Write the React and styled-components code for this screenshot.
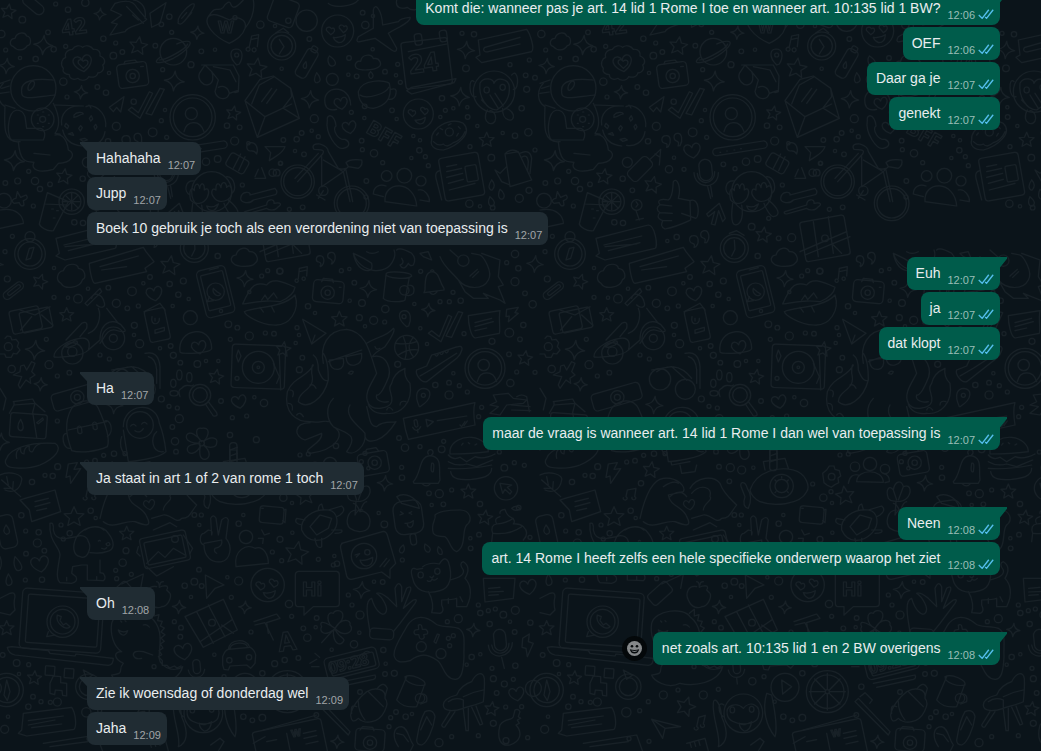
import React from "react";
import styled, { createGlobalStyle, css } from "styled-components";

const GlobalStyle = createGlobalStyle`
  * { box-sizing: border-box; }
  body {
    margin: 0;
    background: #0b141a;
    color: #e9edef;
    font-family: "Segoe UI", "Liberation Sans", Arial, sans-serif;
    font-size: 14px;
    overflow: hidden;
  }
`;

const Chat = styled.main`
  position: relative;
  height: 100vh;
  overflow: hidden;
`;

const Wallpaper = styled.svg`
  position: absolute;
  inset: 0;
  width: 100%;
  height: 100%;
`;

const Thread = styled.ol`
  position: relative;
  display: flex;
  flex-direction: column;
  gap: 12px;
  margin: -8px 0 0;
  padding: 0 41px 0 87px;
  list-style: none;
`;

const Group = styled.li`
  display: flex;
  flex-direction: column;
  align-items: ${(p) => (p.$out ? "flex-end" : "flex-start")};
  gap: 2px;
`;

const Row = styled.div`
  display: flex;
  align-items: center;
  gap: 6px;
`;

const tailIn = css`
  border-top-left-radius: 0;
  &::before {
    content: "";
    position: absolute;
    top: 0;
    left: -7px;
    width: 8px;
    height: 12px;
    background: inherit;
    clip-path: polygon(0 0, 100% 0, 100% 100%, 85% 75%, 0 15%);
  }
`;

const tailOut = css`
  border-top-right-radius: 0;
  &::before {
    content: "";
    position: absolute;
    top: 0;
    right: -7px;
    width: 8px;
    height: 12px;
    background: inherit;
    clip-path: polygon(0 0, 100% 0, 100% 15%, 15% 85%, 0 100%);
  }
`;

const Bubble = styled.div`
  position: relative;
  display: flex;
  align-items: flex-end;
  gap: 7px;
  padding: 8px 6px 2px 9px;
  border-radius: 8px;
  background: ${(p) => (p.$out ? "#005c4b" : "#202c33")};
  ${(p) => p.$tail && (p.$out ? tailOut : tailIn)}
`;

const Text = styled.p`
  margin: 0 0 7px;
  line-height: 16px;
`;

const Meta = styled.span`
  display: flex;
  align-items: center;
  gap: 3px;
  height: 15px;
`;

const Time = styled.time`
  font-size: 11px;
  line-height: 15px;
  color: ${(p) => (p.$out ? "#99beb7" : "#a0a5a8")};
`;

const ReactButton = styled.button`
  display: flex;
  align-items: center;
  justify-content: center;
  width: 25px;
  height: 25px;
  padding: 0;
  border: 0;
  border-radius: 50%;
  background: #04080a;
`;

const Ticks = () => (
  <svg width="16" height="14" viewBox="0.5 2.5 15 13" role="img" aria-label="Gelezen">
    <path
      fill="#53bdeb"
      d="M15.01 3.316l-.478-.372a.365.365 0 0 0-.51.063L8.666 9.879a.32.32 0 0 1-.484.033l-.358-.325a.319.319 0 0 0-.484.032l-.378.483a.418.418 0 0 0 .036.541l1.32 1.266c.143.14.361.125.484-.033l6.272-8.048a.366.366 0 0 0-.064-.512zm-4.1 0l-.478-.372a.365.365 0 0 0-.51.063L4.566 9.879a.32.32 0 0 1-.484.033L1.891 7.769a.366.366 0 0 0-.515.006l-.423.433a.364.364 0 0 0 .006.514l3.258 3.185c.143.14.361.125.484-.033l6.272-8.048a.365.365 0 0 0-.063-.51z"
    />
  </svg>
);

const Smiley = () => (
  <svg width="15" height="15" viewBox="0 0 15 15" aria-hidden="true">
    <circle cx="7.5" cy="7.5" r="7.5" fill="#85888a" />
    <circle cx="5" cy="5.2" r="1.3" fill="#04080a" />
    <circle cx="10" cy="5.2" r="1.3" fill="#04080a" />
    <path d="M2.8 8.2 Q7.5 9.6 12.2 8.2 Q11.4 12.4 7.5 12.4 Q3.6 12.4 2.8 8.2 Z" fill="#04080a" />
    <path d="M4.3 9.5 Q7.5 10.3 10.7 9.5 Q10 10.9 7.5 10.9 Q5 10.9 4.3 9.5 Z" fill="#85888a" />
  </svg>
);

/* Wallpaper motifs: [x, y, size, rotation] in a 1620-unit wide repeating tile */
const STARS = [
  [25, 35, 23, 8], [415, 138, 28, 8], [770, 205, 31, 8], [700, 340, 22, 10], [192, 530, 24, 8], [338, 555, 26, 12],
  [670, 705, 24, 8], [510, 797, 30, 8], [120, 845, 23, 18], [200, 945, 22, 0], [850, 1048, 23, 8], [648, 1131, 23, 10],
  [1460, 420, 23, 0], [1018, 958, 24, 0], [1575, 1075, 23, 8], [1405, 1475, 23, 0], [333, 1410, 25, 8],
  [915, 1487, 29, -8], [222, 1551, 31, 0], [380, 1601, 22, 0], [20, 1885, 23, 0], [103, 2034, 22, 5],
  [437, 2120, 30, 18], [1455, 1553, 23, 8], [1475, 2127, 22, 8], [890, 1660, 36, 10],
];
const SPARKLES = [
  [300, 42, 18], [130, 135, 29], [20, 198, 23], [523, 243, 30], [243, 277, 20], [43, 482, 30], [592, 98, 20],
  [735, 836, 24], [105, 1050, 29], [122, 1153, 20], [343, 1215, 26], [1398, 150, 26], [1380, 290, 28], [930, 298, 26],
  [1105, 867, 25], [1285, 930, 20], [1605, 792, 25], [1155, 1450, 23], [537, 1821, 20], [735, 1822, 19],
  [1085, 1770, 25], [1420, 1890, 20], [1012, 2225, 20], [2, 1325, 26],
];
const HEARTS = [
  [248, 190, 28], [457, 452, 25], [463, 881, 24], [717, 1205, 22], [597, 1042, 22], [1048, 382, 21], [1023, 310, 20],
  [120, 1692, 27], [448, 1514, 17], [550, 1955, 27], [1585, 1761, 25], [1550, 2082, 23],
];
const DOTS = [
  [67, 59, 10], [167, 12, 6], [204, 29, 8], [256, 8, 11], [144, 97, 7], [17, 150, 6], [60, 174, 5], [107, 177, 8],
  [161, 148, 8], [197, 139, 6], [310, 116, 8], [347, 129, 6], [340, 167, 10], [367, 156, 7], [466, 137, 7],
  [484, 73, 7], [515, 97, 6], [508, 50, 8], [604, 154, 7], [645, 149, 5], [573, 194, 9], [488, 209, 6], [327, 219, 5],
  [190, 245, 11], [292, 261, 7], [318, 278, 8], [201, 291, 6], [401, 305, 8], [495, 330, 5], [484, 362, 6],
  [349, 379, 12], [324, 424, 8], [458, 397, 13], [500, 412, 6], [402, 473, 5], [387, 508, 11], [262, 487, 15],
  [432, 508, 6], [550, 493, 7], [585, 506, 6], [618, 485, 11], [653, 477, 10], [704, 423, 12], [745, 430, 5],
  [719, 382, 7], [681, 377, 8], [781, 74, 11], [705, 53, 6], [4, 102, 11], [86, 514, 6], [53, 543, 9], [16, 549, 7],
  [105, 543, 11], [120, 567, 8], [150, 553, 7], [248, 536, 8], [277, 571, 7], [223, 667, 8], [249, 669, 8], [100, 618, 6],
  [727, 555, 6], [818, 518, 11], [841, 490, 6], [635, 680, 10], [716, 715, 7], [755, 713, 12], [686, 655, 6],
  [410, 711, 8], [382, 723, 5], [37, 709, 6], [15, 755, 6], [22, 837, 9], [162, 804, 5], [162, 892, 6], [204, 893, 5],
  [234, 896, 13], [264, 866, 5], [325, 863, 7], [349, 910, 12], [396, 874, 13], [382, 925, 7], [415, 918, 6],
  [450, 831, 7], [430, 850, 5], [509, 852, 8], [550, 843, 9], [535, 884, 8], [566, 897, 5], [518, 918, 5],
  [403, 976, 9], [402, 1005, 5], [419, 1031, 12], [480, 1045, 5], [512, 1038, 7], [520, 1066, 9], [541, 1088, 7],
  [653, 768, 8], [592, 1092, 10], [618, 1083, 5], [655, 1083, 5], [691, 1018, 6], [685, 973, 10], [712, 983, 7],
  [748, 1008, 12], [796, 999, 6], [822, 1001, 7], [785, 828, 6], [803, 812, 6], [839, 814, 9], [748, 876, 5],
  [139, 1018, 6], [147, 1094, 12], [35, 1107, 11], [208, 1118, 7], [172, 1128, 6], [300, 1065, 6], [328, 1077, 6],
  [387, 1068, 7], [484, 1197, 9], [507, 1219, 6], [532, 1224, 6], [663, 1203, 7], [792, 1209, 11], [763, 1192, 5],
  [538, 1256, 12], [517, 1281, 7], [525, 1324, 11], [697, 1253, 6], [740, 1248, 6], [690, 1305, 8], [769, 1319, 9],
  [528, 1355, 7], [342, 1361, 8], [311, 1366, 6], [172, 1263, 6], [173, 1400, 9], [260, 1386, 6], [285, 1382, 7],
  [135, 1426, 6], [96, 1446, 8], [158, 1428, 8], [303, 1450, 8], [375, 1361, 6], [537, 1400, 7], [571, 1403, 12],
  [605, 1410, 12], [568, 1444, 7], [640, 1403, 5], [64, 1546, 8], [77, 1593, 6], [116, 1597, 8], [112, 1629, 12],
  [133, 1652, 7], [78, 1661, 7], [76, 1740, 6], [126, 1739, 8], [183, 1575, 6], [209, 1600, 8], [190, 1617, 6],
  [272, 1532, 8], [287, 1554, 5], [378, 1652, 9], [368, 1688, 11], [347, 1711, 6], [350, 1736, 6], [394, 1723, 6],
  [583, 1545, 7], [604, 1545, 6], [598, 1575, 5], [716, 1571, 8], [730, 1545, 5], [597, 1709, 7], [554, 1757, 8],
  [583, 1745, 10], [605, 1758, 7], [573, 1791, 5], [716, 1743, 12], [682, 1732, 5], [694, 1792, 6], [523, 1865, 6],
  [543, 1883, 7], [541, 1910, 7], [753, 1896, 6], [643, 1964, 5], [8, 1965, 7], [50, 1989, 10], [86, 1994, 6],
  [57, 2022, 5], [99, 2090, 7], [85, 2120, 8], [123, 2105, 6], [151, 2107, 6], [24, 2150, 5], [14, 2188, 12],
  [172, 2106, 12], [259, 2137, 14], [299, 2132, 6], [370, 2085, 12], [414, 2070, 6], [462, 2000, 6], [490, 2085, 12],
  [637, 2044, 11], [672, 2030, 6], [535, 2068, 6], [730, 2150, 8], [757, 2161, 7], [787, 2153, 10], [704, 2105, 5],
  [787, 2020, 8], [964, 2060, 8], [949, 2145, 7], [267, 2216, 6], [327, 2224, 6], [325, 2105, 6],
  [825, 78, 5], [865, 62, 8], [928, 117, 7], [1088, 38, 7], [1096, 75, 11], [1119, 48, 5], [1118, 148, 5],
  [1047, 174, 7], [1070, 229, 7], [1045, 224, 5], [1193, 193, 6], [1155, 215, 7], [1188, 226, 5], [1201, 247, 6],
  [845, 206, 5], [943, 356, 12], [935, 392, 5], [905, 399, 7], [955, 410, 6], [890, 418, 8], [850, 420, 7], [1094, 319, 7],
  [1054, 337, 6], [1093, 354, 5], [1176, 331, 7], [1190, 357, 5], [1085, 422, 7], [1087, 449, 6], [1122, 460, 11],
  [1240, 408, 5], [1260, 421, 5], [1258, 451, 8], [1276, 470, 6], [1234, 474, 5], [1285, 497, 6], [1099, 543, 7],
  [1098, 591, 6], [1148, 488, 6], [1326, 295, 8], [1336, 331, 6], [1321, 351, 5], [1360, 325, 5], [1402, 322, 5],
  [1403, 351, 7], [1432, 378, 5], [1398, 205, 10], [1386, 100, 6], [1422, 103, 8], [1577, 226, 7], [1605, 233, 7],
  [1530, 194, 6], [1580, 268, 9], [1565, 325, 8], [1508, 399, 5], [1545, 407, 8], [1585, 397, 11], [1474, 473, 10],
  [1410, 440, 6], [1587, 571, 9], [1558, 595, 12], [1408, 611, 11], [1440, 619, 5], [1605, 450, 6], [1588, 180, 6],
  [885, 453, 5], [912, 463, 7], [842, 490, 6], [830, 518, 10], [868, 628, 6], [908, 622, 7], [1478, 623, 7],
  [840, 813, 9], [1024, 812, 6], [1048, 807, 5], [1063, 848, 7], [1049, 902, 5], [1086, 909, 10], [1156, 927, 11],
  [1243, 912, 5], [1154, 966, 6], [1121, 961, 12], [1078, 953, 9], [1095, 979, 5], [924, 919, 8], [945, 939, 5],
  [891, 983, 6], [897, 1005, 5], [887, 1029, 5], [1261, 985, 5], [1281, 1032, 5], [1193, 1093, 9],
  [1262, 814, 6], [1320, 905, 6], [1348, 905, 6], [1382, 902, 8], [1359, 877, 6], [1392, 1001, 6], [1476, 1024, 9],
  [1528, 998, 13], [1570, 975, 8], [1560, 1018, 7], [1598, 913, 11], [1575, 880, 7], [1545, 845, 12], [1520, 788, 6],
  [1555, 805, 8], [1545, 762, 11], [1527, 1063, 7], [1550, 1116, 6], [1531, 1149, 11], [1605, 1117, 6], [1306, 1155, 8],
  [1347, 1148, 7], [1378, 1157, 6], [1347, 1185, 12], [1402, 1176, 6], [1360, 1120, 5], [1445, 1222, 6], [1436, 1250, 6],
  [907, 1073, 7], [898, 1109, 9], [1197, 1314, 7], [1215, 1343, 11], [1260, 1340, 6], [1331, 1324, 6], [1325, 1348, 10],
  [1205, 1402, 6], [1206, 1433, 8], [1287, 1480, 7], [1318, 1481, 12], [1355, 1470, 6], [1008, 1338, 8], [1498, 1356, 6],
  [1513, 1403, 10], [1543, 1388, 6], [1573, 1396, 6], [818, 1452, 6], [850, 1493, 11], [873, 1475, 6], [876, 1509, 5],
  [1084, 1385, 6], [1095, 1360, 6], [1105, 1405, 5], [925, 1362, 6], [900, 1365, 6], [840, 1618, 9], [877, 1598, 5],
  [817, 1656, 6], [845, 1682, 6], [955, 1678, 6], [1003, 1668, 5], [1000, 1695, 6], [1011, 1691, 8], [1153, 1573, 10],
  [1136, 1539, 5], [1122, 1745, 5], [1148, 1746, 7], [1045, 1785, 6], [1056, 1815, 6], [1080, 1845, 12], [867, 1812, 11],
  [875, 1849, 6], [950, 1854, 7], [910, 1885, 7], [922, 1913, 11], [947, 1882, 5], [1062, 1933, 11], [1078, 1898, 5],
  [1150, 1950, 8], [995, 1949, 5], [824, 1991, 9], [854, 1980, 8], [895, 1974, 7], [1157, 1991, 5], [1155, 2022, 7],
  [1183, 2020, 9], [1080, 2076, 7], [1188, 2136, 7], [1217, 2150, 8], [1172, 2153, 6], [1236, 2142, 5], [1167, 2180, 6],
  [1317, 2228, 12], [1355, 2210, 6], [1342, 1865, 6], [1375, 1856, 12], [1345, 1915, 6], [1360, 1907, 6], [1349, 1937, 6],
  [1415, 1971, 8], [1400, 1994, 5], [1441, 1963, 5], [1435, 1815, 6], [1441, 1839, 8], [1465, 1832, 6], [1486, 1827, 6],
  [1510, 1844, 10], [1546, 1831, 12], [1530, 1865, 5], [1544, 1896, 7], [1469, 1872, 8], [1476, 2005, 6], [1480, 2036, 9],
  [1513, 2052, 9], [1546, 1997, 8], [1540, 2038, 6], [1490, 2079, 7], [1480, 2170, 9], [1591, 1868, 8], [1517, 2121, 6],
  [1565, 2120, 6], [1583, 2213, 6], [1435, 2207, 6], [1440, 1512, 8], [1411, 1615, 5], [1437, 1604, 7], [1412, 1645, 7],
  [1330, 1513, 7], [1295, 1515, 5], [1207, 1680, 6], [1556, 1523, 7], [1590, 1612, 6],
];
/* Round-cornered boxes: [cx, cy, width, height, corner, rotation] */
const BOXES = [
  [398, 225, 90, 72, 12, -8], [985, 875, 92, 66, 12, 5], [1120, 1390, 90, 66, 12, -10], [1110, 2220, 88, 66, 12, 4],
  [600, 445, 165, 22, 11, -9], [647, 875, 88, 145, 14, -14], [647, 872, 68, 108, 4, -14],
  [472, 975, 62, 96, 8, -12], [77, 960, 90, 70, 8, -12], [108, 960, 92, 62, 6, -12],
  [775, 1100, 160, 130, 10, 2], [230, 1190, 150, 52, 12, -16], [85, 1277, 110, 72, 8, 4],
  [495, 1648, 140, 92, 10, -12], [495, 1650, 116, 68, 4, -12], [185, 1862, 245, 180, 14, 4], [188, 1862, 215, 145, 5, 4],
  [855, 715, 135, 120, 8, -10], [815, 1545, 72, 50, 9, 5], [1055, 1990, 160, 66, 14, -14], [1058, 1992, 135, 42, 6, -14],
  [1280, 190, 140, 140, 8, -7], [1255, 118, 22, 34, 8, -8], [1330, 108, 22, 34, 8, -8], [150, 2012, 28, 28, 2, 4],
  [207, 2020, 28, 28, 2, 4], [870, 2230, 210, 110, 8, -12], [1385, 530, 120, 130, 10, -10], [1415, 520, 34, 48, 5, -10],
  [920, 190, 36, 92, 12, 30], [943, 148, 18, 18, 5, 30], [20, 1595, 52, 100, 16, -12], [497, 510, 38, 64, 19, -6],
  [590, 2000, 22, 42, 11, -5], [1500, 1920, 36, 64, 18, -6], [1145, 1902, 72, 32, 12, 4], [100, 15, 74, 30, 15, 40],
  [1225, 1552, 86, 100, 26, -8], [1240, 1618, 18, 34, 9, -8], [700, 1370, 22, 84, 10, 0],
  [850, 35, 80, 80, 12, 20], [300, 507, 40, 80, 12, 45], [360, 1780, 40, 74, 10, 48],
  [712, 490, 44, 62, 10, -60], [40, 872, 70, 24, 12, -38], [42, 870, 46, 10, 5, -38],
];
/* Rings: [x, y, radius] */
const RINGS = [
  [398, 228, 20], [398, 228, 8], [520, 155, 40], [100, 265, 68], [128, 358, 34], [128, 358, 9], [578, 352, 68],
  [578, 352, 58], [574, 341, 18], [215, 605, 38], [215, 605, 28], [290, 615, 16], [90, 762, 46], [90, 762, 36],
  [90, 710, 15], [583, 745, 42], [583, 745, 32], [845, 138, 42], [845, 138, 32], [1013, 93, 48], [1255, 342, 45],
  [803, 1755, 50], [1482, 275, 62], [635, 575, 60], [610, 2140, 58], [920, 62, 32], [25, 1040, 12],
  [983, 878, 20], [983, 878, 8], [1124, 1388, 20], [1124, 1388, 8], [1110, 2228, 20], [1110, 2228, 8],
  [647, 875, 26], [663, 933, 5], [775, 1102, 48], [775, 1102, 18], [775, 1102, 4], [217, 1060, 32], [217, 1055, 14],
  [340, 1015, 34], [340, 1015, 12], [1220, 1042, 36], [1455, 1105, 60], [1455, 1105, 50], [1451, 1095, 17],
  [420, 1275, 40], [600, 1185, 32], [600, 1185, 22], [605, 1330, 8], [725, 1458, 35], [725, 1458, 20],
  [875, 1430, 10], [188, 1865, 47], [188, 1865, 37], [735, 2062, 42], [862, 2075, 63], [862, 2075, 50],
  [862, 2075, 6], [20, 2070, 50], [20, 2070, 38], [265, 2060, 38], [265, 2060, 27], [893, 545, 50], [893, 545, 42],
  [1055, 610, 52], [1055, 610, 44], [970, 572, 14], [1160, 528, 16], [1213, 527, 22], [1263, 543, 15],
  [945, 1400, 14], [990, 1392, 20], [1035, 1407, 14], [1518, 1465, 35], [1264, 1940, 15], [1323, 1961, 15],
  [1092, 1668, 38], [1102, 1657, 8], [1390, 782, 17], [571, 953, 21], [738, 1611, 20], [997, 238, 18],
  [688, 1981, 8], [747, 1972, 8], [1213, 871, 14], [1260, 2095, 14], [1518, 2222, 9],
  [1270, 1186, 6], [1212, 950, 6], [710, 165, 6], [855, 715, 10], [636, 1868, 10], [525, 1617, 10], [1348, 396, 12],
  [12, 602, 22], [360, 1138, 32], [436, 1168, 30], [232, 1192, 20], [232, 1192, 9], [1600, 2065, 24],
];
/* Line drawings */
const PATHS = [
  // rocket, paper plane, comet and flaming heart
  "M345 10 C375 0 400 2 410 22 L440 58 C420 80 385 75 375 95 L330 105 L352 72 L334 68 L365 45 L332 30 Z M380 20 L430 70 M398 45 L415 60 M400 0 C430 5 440 30 435 55 M450 40 L498 8 L480 70 L455 82 Z M535 65 C530 50 575 5 582 12 C588 18 550 75 540 72 C535 72 533 70 535 65 M545 55 L560 38 M556 60 L575 38",
  "M688 130 C640 110 610 70 625 50 C640 35 665 50 688 60 C715 45 742 60 735 85 C728 108 710 118 688 130 M625 50 C650 10 650 40 670 22 C675 10 690 0 692 12 C700 35 720 10 730 0 M735 85 C755 60 765 30 760 0",
  // clouds
  "M40 140 C25 135 30 115 45 115 C50 95 75 95 80 108 C95 110 95 135 82 137 C70 155 50 152 40 140 Z M183 850 C165 840 172 815 190 812 C200 785 235 790 235 805 C258 808 258 835 248 838 C240 865 195 870 183 850 Z M700 790 C688 780 695 765 708 765 C715 740 740 740 748 755 C768 752 780 780 765 790 C755 802 712 802 700 790 Z M1070 205 C1060 195 1070 180 1082 184 C1085 162 1115 160 1120 176 C1140 172 1148 195 1135 202 C1120 212 1080 212 1070 205 Z M1190 0 C1185 25 1205 28 1222 22 C1235 35 1255 30 1262 20",
  // planet ring, music notes, pins
  "M480 172 C455 190 475 195 520 175 C565 150 580 125 565 124 C550 122 535 130 530 132 M478 180 C500 180 560 145 563 132 M748 140 L755 108 L776 104 L772 140 M755 118 L774 114 M748 143 a6 6 0 1 0 1 1 M766 145 a6 6 0 1 0 1 1 M895 835 L898 805 L922 800 L920 828 M898 815 L921 810 M893 838 a5 5 0 1 0 1 1 M914 832 a5 5 0 1 0 1 1 M258 1490 L262 1470 L288 1465 L284 1490 M250 1493 a6 5 0 1 0 9 -2 M276 1492 a6 5 0 1 0 9 -2 M470 2180 L476 2152 L496 2146 L490 2172 M463 2183 a6 5 0 1 0 9 -2 M482 2175 a6 5 0 1 0 9 -2",
  "M710 195 C685 170 690 148 708 147 C730 147 730 172 718 192 Z M1220 980 C1190 955 1195 935 1212 932 C1235 932 1234 960 1226 978 Z M1258 1220 C1240 1180 1255 1165 1272 1165 C1295 1168 1300 1195 1260 1220 Z",
  // scalloped badge
  "M190 205 C178 190 188 175 197 172 C192 155 208 148 217 148 C225 135 240 135 248 142 C260 132 275 140 280 148 C298 146 302 160 300 168 C318 175 316 190 308 195 C316 210 302 220 294 218 C290 235 272 232 266 230 C258 245 240 242 234 235 C220 242 208 235 208 224 C195 224 186 215 190 205 Z M235 190 C232 178 245 175 249 184 C258 176 268 182 262 194 L250 205 Z",
  // camera tops
  "M372 192 L375 184 L405 180 L412 187 M422 200 l8 -1 M965 845 L970 835 L998 838 L1000 848 M1018 862 l5 0 M1095 1358 L1100 1348 L1128 1343 L1135 1352 M1080 2190 L1088 2180 L1118 2182 L1122 2192",
  // sunglasses
  "M598 220 C592 240 610 258 625 254 C640 250 642 228 635 215 M605 195 L700 195 L717 228 L715 275 L705 278 M598 220 L615 195 L635 215 L655 240 L645 275 C650 298 680 305 688 280 L712 272 M640 200 L690 210 L708 245 M655 262 C670 255 685 262 688 280",
  // astronaut
  "M65 275 C60 240 105 235 160 240 M65 275 C62 305 110 290 165 285 M85 270 C80 255 95 240 102 245 C108 255 92 275 85 270 M10 250 C-10 270 -10 305 15 320 C12 380 10 430 60 425 M50 330 C20 335 20 410 35 420 L130 420 C140 400 130 385 120 385 L80 385 L75 350 C70 335 60 330 50 330 M15 315 L45 325 M160 310 C180 350 180 380 165 400 L180 402 M55 425 C60 490 80 485 102 487 C90 510 120 520 160 508 L175 490 C215 490 230 460 205 450 C200 410 180 400 165 405 M102 460 L150 465 M0 250 L30 240 M5 265 L28 258 M0 280 L28 276",
  "M112 345 l3 0 M128 336 l3 0 M145 345 l3 0 M112 370 l3 0 M128 380 l3 0 M145 370 l3 0",
  // cratered moon
  "M165 315 L250 318 M185 375 C180 340 205 318 235 318 M265 316 C300 318 320 350 317 380 M315 395 C310 430 280 440 260 436 M245 438 C215 435 195 420 188 390 M222 345 C230 335 248 335 250 342 C240 342 235 350 222 352 Z M258 320 l10 -4 l5 8 M268 355 l6 -8 l4 10 l-6 6 Z M282 380 l5 -7 l4 8 l-5 8 Z M236 385 l6 -8 l5 6 l-6 10 Z M198 370 l8 8 l-4 8 l-8 -8 Z M205 402 l12 -4 l4 8 Z M240 418 l14 -3 l8 5 l-14 4 Z",
  // paper planes and double ticks
  "M328 322 L372 290 L362 336 L350 322 L340 335 Z M385 330 L395 322 L415 338 L448 275 L458 280 L420 355 Z M438 340 L480 265 L493 268 L455 345 Z M795 440 L855 440 C850 460 825 470 808 482 L812 458 Z M908 958 L978 1000 L935 1032 Z M935 1032 L945 1005 M616 1725 L672 1755 L645 1765 L620 1795 Z M335 2158 L422 2180 L375 2185 L368 2215 Z M336 2158 L375 2185 M1285 1000 L1295 992 L1318 1010 L1345 945 L1355 950 L1323 1025 Z M1338 1008 L1375 935 L1388 938 L1355 1012 Z",
  // avatars
  "M552 395 C560 360 600 358 612 395 M1432 1145 C1440 1110 1480 1110 1490 1145",
  // open envelope
  "M735 302 L780 238 L820 228 L872 265 L898 355 L772 412 L735 302 L795 350 L875 312 M795 350 L772 412 M850 325 L898 355 M755 312 L778 255 L820 232 M785 305 L815 265 M800 310 L830 268 M872 265 L875 290 L848 325",
  // quotes
  "M385 440 C395 425 392 405 378 407 C362 408 362 428 376 430 C382 430 382 435 380 442 Z M420 437 C430 420 425 398 412 400 C398 402 400 422 412 424 C418 426 416 432 414 438 Z M770 462 C776 445 768 427 752 428 C735 432 738 452 752 453 C762 452 766 455 770 462 Z M468 740 C480 725 475 705 460 707 C445 708 446 728 458 730 C465 732 464 738 462 742 Z M500 728 C512 712 506 690 492 692 C478 696 480 712 490 714 C498 716 496 722 494 728 Z M962 800 C976 790 974 768 960 767 C946 768 946 784 956 786 C964 788 964 794 960 798 Z M996 792 C1010 780 1008 756 994 757 C980 758 980 774 990 776 C998 780 998 786 994 792 Z",
  // pencils
  "M330 478 L362 448 L358 495 M345 462 L358 470 M365 1752 L430 1722 L422 1765 M765 535 L797 535 L785 503 M700 505 L722 462 M716 512 L735 470 M775 508 L765 530",
  // password dots and microphones
  "M540 457 h2 M560 453 h2 M582 450 h2 M602 446 h2 M462 518 C465 570 535 570 535 518 M472 520 C475 560 525 555 524 515 M503 560 L512 595 M512 558 L517 590 M565 2010 C570 2040 610 2040 614 2008 M590 2034 L592 2052 M1465 1935 C1470 1985 1535 1975 1537 1928 M1475 1935 C1480 1972 1528 1965 1527 1930 M1505 1972 L1513 2005",
  // monkey covering its eyes
  "M572 600 C565 575 575 555 583 572 C583 550 596 545 599 565 C602 545 614 548 613 570 C625 560 630 575 622 592 C610 615 585 615 572 600 M640 590 C630 575 638 562 648 570 C646 548 658 545 663 563 C664 543 678 543 680 562 C688 552 696 560 696 575 C695 605 655 615 640 590 M578 610 C570 670 580 680 595 672 C610 660 608 630 605 615 M685 600 C715 625 725 645 700 650 C690 650 675 620 672 610 M620 618 Q640 625 655 612 Q645 640 625 628 Z M570 585 C550 575 555 540 583 543 M680 530 C705 530 710 570 696 580",
  // monkey with hand over mouth
  "M1440 250 C1450 230 1480 235 1482 250 C1490 230 1525 235 1528 260 C1530 290 1515 315 1490 330 C1460 330 1435 290 1440 250 M1422 245 C1405 225 1405 300 1428 290 M1535 225 C1555 200 1560 270 1540 268 M1445 300 L1465 320 M1470 285 L1495 325 M1485 280 L1510 318 M1462 330 C1440 370 1485 385 1487 355 C1488 340 1475 330 1470 332 M1508 325 C1505 365 1545 370 1540 345 C1535 330 1520 325 1515 325 M1460 270 m-8 0 a8 9 0 1 0 16 0 a8 9 0 1 0 -16 0 M1508 262 m-8 0 a8 9 0 1 0 16 0 a8 9 0 1 0 -16 0",
  // monkey with open arms
  "M562 2145 C555 2115 590 2105 610 2125 C630 2100 665 2115 655 2150 C650 2180 570 2180 562 2145 M577 2130 m-7 0 a7 9 0 1 0 14 0 a7 9 0 1 0 -14 0 M635 2128 m-7 0 a7 9 0 1 0 14 0 a7 9 0 1 0 -14 0 M598 2170 Q610 2180 635 2165 Q630 2195 612 2193 Q598 2185 598 2170 Z M552 2115 C530 2100 535 2140 550 2150 M520 2110 C515 2150 545 2215 535 2240 C560 2230 568 2200 545 2150 C540 2100 520 2090 520 2110 M680 2080 C665 2130 680 2180 705 2210 C715 2180 700 2110 695 2085 Z",
  // cocktail, cherry, thumbs up, arrow
  "M142 578 L205 605 L160 692 C140 695 120 680 118 672 Z M135 612 L200 615 M190 605 L240 605 M215 580 L215 630 M197 587 L233 623 M233 587 L197 623 M155 627 h5 M170 632 h5 M160 654 h5 M288 632 L298 660 M288 660 L310 655 M288 605 l6 8 l-6 8",
  "M400 545 C410 530 425 560 415 595 L450 602 L452 660 C430 670 410 680 375 687 C360 680 365 670 368 662 C350 655 352 645 360 638 C348 630 350 620 360 614 C348 600 365 595 385 600 C400 590 398 560 400 545 M360 614 L395 618 M360 638 L397 640 M368 662 L395 662 M450 602 C480 590 478 650 468 655 L425 640 M500 642 L538 610 L556 655 L548 665 L536 632 L525 675 L514 672 L524 635 L505 650 Z",
  "M52 575 L62 592 L78 585 C88 595 75 600 70 602 L72 615 C65 622 60 615 58 608 L42 610 C30 602 42 595 48 595 Z M0 630 C50 620 70 650 70 670 L0 685",
  // spanners
  "M722 595 C725 570 755 575 750 585 L825 565 C835 575 830 585 822 585 L760 600 C750 612 722 610 722 595 M735 635 L800 615 C800 595 825 595 822 610 C845 605 845 615 835 620 C825 635 805 630 800 625 L740 642 C730 642 732 636 735 635",
  // stopwatch needle and clock hands
  "M78 780 L88 745 L102 742 L92 775 Z M583 720 L585 748 L575 768 M568 700 L590 692 L612 706 M838 118 L852 140 L838 162 M828 98 L850 85 L866 98 M12 2085 L20 2040 L30 2075 L22 2102 Z",
  // message bubbles
  "M168 715 L325 675 C345 675 355 740 345 745 L195 780 L168 768 L178 760 Z M192 735 L305 708 M195 740 L290 732 M205 752 L300 728 M268 790 L430 742 L438 755 L462 785 L435 805 L440 815 L285 850 C275 850 268 800 268 790 M300 800 L415 768 M305 810 L380 800",
  "M1435 120 L1580 88 C1590 100 1605 145 1595 155 L1445 188 L1428 172 L1440 165 Z M1455 142 L1560 112 M1465 155 L1560 132 M1455 142 C1445 150 1455 158 1465 155 M75 1495 L165 1470 L182 1535 L95 1565 L88 1530 L60 1500 Z M105 1505 L145 1495 M105 1520 L150 1508 M110 1532 L140 1525",
  "M1405 947 L1500 932 C1495 950 1502 990 1498 1000 L1425 1014 C1412 1010 1405 970 1405 947 M1425 968 L1475 955 M1425 980 L1480 965 M1425 992 L1460 984 M1450 1735 L1545 1735 L1540 1795 L1455 1806 Z M1466 1765 L1500 1762 M1466 1776 L1510 1774 M1466 1786 L1495 1784 M70 2140 L215 2122 C228 2140 230 2180 222 2188 L80 2208 L55 2200 L65 2190 Z M85 2162 L190 2148 M85 2175 L165 2160 M95 2183 L185 2172 M130 2230 L290 2205 L310 2260 M150 2240 L265 2225 M896 1714 H1010 Q1018 1715 1018 1725 V1810 Q1018 1820 1008 1820 H940 L912 1845 V1820 H895 Q886 1820 886 1808 V1725 Q886 1715 896 1714",
  "M1025 1630 L1150 1594 Q1158 1594 1162 1605 L1187 1690 L1170 1708 L1170 1735 L1145 1716 L1055 1738 Q1045 1740 1040 1728 L1022 1645 Q1020 1634 1028 1630 M1065 1665 l14 -4 l-10 10 M1080 1680 Q1095 1685 1118 1672 Q1120 1695 1100 1698 Q1085 1698 1080 1680 M1140 1700 L1148 1690 L1160 1675 M1152 1700 L1168 1680",
  // map folds
  "M820 665 L835 770 M865 650 L880 760 M780 755 L920 695 M795 765 L930 710 M880 735 L905 760 M555 1850 L670 1798 L712 1890 L610 1942 Z M590 1835 L640 1930 M625 1815 L675 1910 M600 1925 L695 1860 M665 1875 L700 1900",
  // letters, scooter
  "M60 930 L105 945 L150 920 M62 990 L95 950 M158 975 L125 945 M162 1070 C160 1050 200 1020 240 1015 C280 1010 265 1050 265 1050 C250 1070 160 1075 162 1070 M198 1020 L245 970 Q265 960 260 985 L240 1010 M195 1040 L225 1022 Q240 1025 225 1035 L205 1042 Z M265 1050 L300 1020 C300 960 350 950 372 985 C385 1000 360 995 345 990 C320 985 310 1020 300 1030 M265 1000 C295 990 305 950 295 925 M320 925 L355 970 M255 910 L300 865 L305 875 L262 917 Z M275 895 C280 875 305 880 312 905 C320 925 300 925 290 915",
  // passport and lips
  "M432 935 L480 910 L495 930 M456 950 C450 980 480 975 478 955 M465 955 l0 8 M465 990 l28 -8 l0 10 l-28 8 Z M728 912 C755 850 770 845 800 855 C815 835 840 840 885 862 C880 890 850 900 840 905 C800 900 780 905 728 912 M733 935 C760 920 850 925 885 885 C900 930 870 980 820 975 C780 975 735 945 733 935 M785 900 l10 -15 l8 14 l18 -20 l10 15 M780 922 l10 14 M815 920 l8 16",
  // handsets
  "M640 865 C635 880 655 895 662 882 L652 876 L645 870 Z M172 1845 C165 1870 200 1895 210 1880 L198 1870 L190 1875 L180 1862 L184 1850 Z M145 1895 L140 1910 L165 1905 M628 810 L655 803 M628 890 L622 905 L640 902",
  // people holding a heart
  "M540 1055 C530 985 635 970 635 1045 C635 1060 540 1065 540 1055 M975 310 C965 255 1050 250 1052 315 M975 310 Q980 335 1010 328",
  // gear rims
  "M15 1015 L22 1008 L32 1010 L36 1020 L48 1018 L56 1028 L52 1040 L60 1050 L50 1062 L40 1060 L34 1072 L18 1072 L14 1062 L0 1062 M868 1398 L882 1398 L885 1408 L898 1412 L902 1428 L894 1434 L896 1448 L884 1454 L874 1462 L862 1456 L852 1448 L850 1434 L848 1420 L860 1410 Z",
  // robot star
  "M62 1098 L72 1095 L80 1110 L95 1085 L105 1090 L95 1115 L105 1125 L90 1135 L92 1150 L78 1140 L60 1165 L55 1155 L65 1130 L40 1125 L60 1115 Z M0 1165 L18 1195 L10 1230",
  // spectacles, paw, magnifier
  "M335 1110 L395 1100 L440 1140 M350 1115 C380 1095 420 1090 455 1135 M435 1060 Q475 1050 480 1100 L480 1165 M445 1070 Q468 1075 470 1110 L470 1150 M616 1212 L640 1248 Q655 1250 650 1238 L625 1205",
  "M538 1125 m-8 0 a8 15 0 1 0 16 0 a8 15 0 1 0 -16 0 M568 1132 m-8 0 a8 14 0 1 0 16 0 a8 14 0 1 0 -16 0 M520 1150 m-8 0 a8 12 0 1 0 16 0 a8 12 0 1 0 -16 0 M522 1180 m-12 0 a12 8 0 1 0 24 0 a12 8 0 1 0 -24 0 M545 1165 C560 1145 575 1165 580 1155 M540 1190 C535 1175 535 1170 545 1165",
  // turntable arm and wand
  "M838 1065 L842 1170 M820 1090 L838 1130 L830 1150 M715 1050 l8 18 l-8 18 l-6 -18 Z M705 1135 a6 6 0 1 0 12 0 a6 6 0 1 0 -12 0",
  // backpack and carton
  "M215 1225 C240 1195 280 1195 295 1225 C320 1280 330 1320 322 1340 C290 1355 240 1360 215 1352 C200 1310 190 1270 215 1225 M205 1290 L320 1265 M232 1282 q6 -8 12 0 l2 16 q-6 6 -12 0 Z M278 1270 q6 -8 12 0 l2 16 q-6 6 -12 0 Z M200 1300 C180 1300 190 1350 210 1345 M312 1265 C330 1250 345 1295 322 1310 M40 1205 L98 1197 L105 1210 M42 1205 L42 1215 L105 1210 L135 1235 M42 1215 L28 1240 M98 1237 L110 1312 M98 1237 L105 1210 M62 1258 C50 1275 52 1290 62 1292 C72 1290 72 1275 62 1258 M110 1268 l18 -14 l2 5 l-15 12 Z",
  // bread, bolts, leaf
  "M20 1375 C30 1345 90 1325 165 1330 C190 1345 165 1375 120 1395 C80 1410 25 1405 20 1395 Q12 1385 20 1375 M50 1375 Q45 1350 62 1345 Q60 1360 72 1362 Q72 1340 88 1338 Q85 1358 98 1355 Q105 1335 120 1332 M205 1392 L232 1388 L222 1408 L242 1406 L212 1450 L210 1428 L198 1432 Z M0 1425 C30 1410 70 1425 65 1440 C60 1470 40 1480 15 1470 M5 1440 L62 1490 M25 1455 L20 1430 M38 1468 L40 1445 M35 1465 L12 1465 M1520 928 L1555 922 L1545 938 L1555 940 L1525 965 L1528 948 L1518 950 Z M1260 760 L1285 755 L1295 780 L1270 770 Z M1568 1915 L1588 1902 L1585 1925 L1600 1930 L1582 1970 L1578 1945 L1566 1942 Z",
  // penguin, flower
  "M370 1280 C370 1210 470 1200 478 1270 C490 1300 495 1330 498 1355 C480 1375 395 1385 385 1385 L370 1290 M365 1310 C355 1340 370 1365 382 1365 M470 1295 C450 1310 455 1360 490 1355 M392 1278 q8 -10 16 0 M425 1272 q8 -10 16 0 M405 1292 Q420 1302 430 1286 M393 1385 L395 1395 L450 1385 M420 1395 L425 1420 L465 1415 L470 1395",
  "M605 1325 C580 1300 590 1280 605 1285 C630 1280 630 1305 610 1325 C635 1305 655 1315 650 1328 C650 1345 625 1345 610 1335 C635 1355 630 1375 615 1378 C595 1378 598 1350 602 1335 C590 1365 565 1365 562 1350 C560 1335 580 1332 600 1330 C570 1330 555 1320 560 1305 C570 1290 595 1310 605 1325",
  // candy cane stripes, hands with a heart
  "M690 1350 l22 -8 M690 1368 l22 -8 M690 1386 l22 -8 M300 1555 C310 1510 330 1440 370 1435 C410 1430 440 1460 430 1475 L385 1485 C390 1520 430 1520 440 1550 C460 1585 430 1575 405 1565 C370 1560 340 1590 310 1565 M450 1465 C470 1430 520 1425 540 1450 C550 1480 575 1500 590 1515 C570 1540 570 1555 545 1555 C530 1575 510 1540 490 1545 L455 1555 M455 1480 C480 1450 520 1460 510 1490 C520 1500 490 1510 490 1530 M390 1490 C410 1470 430 1475 440 1490 M370 1460 Q400 1440 415 1450",
  // submarine
  "M630 1470 C650 1410 720 1400 760 1410 C800 1420 810 1460 800 1475 C780 1515 700 1520 660 1505 C640 1495 632 1480 630 1470 M675 1410 L670 1385 L735 1375 L745 1405 M690 1380 L690 1350 L710 1350 L712 1378 M605 1465 C595 1445 615 1440 622 1465 Q640 1490 625 1525 Q605 1520 615 1490 Z M725 1430 l0 4 M705 1440 l3 3 M745 1440 l-3 3 M705 1478 l3 -3 M745 1478 l-3 -3",
  // group busts
  "M925 1450 Q930 1420 955 1425 M950 1445 C950 1405 1030 1405 1030 1447 Z M1030 1420 Q1050 1425 1048 1445 L1035 1448 M1155 605 C1150 540 1245 540 1250 618 Z M1150 590 L1120 582 C1120 560 1140 550 1158 558 M1255 570 C1275 565 1290 590 1288 605 L1260 600",
  // turtle, video camera, tulip
  "M905 1590 C900 1555 940 1525 985 1530 C1015 1535 1020 1575 995 1600 C970 1625 925 1635 905 1590 M930 1580 L960 1545 L995 1555 L985 1585 L950 1605 Z M985 1530 L1025 1518 Q1040 1530 1020 1545 L1010 1550 M905 1575 Q880 1570 890 1555 L915 1560 M945 1615 Q950 1650 965 1640 L965 1615 M995 1590 L1025 1590 Q1030 1600 1005 1600 M955 1530 Q955 1515 965 1512 L970 1528 M852 1530 L858 1528 L855 1568 L848 1562 M785 1525 h5 M1045 1495 C1035 1465 1050 1455 1060 1470 C1065 1440 1085 1440 1090 1460 C1115 1450 1115 1480 1100 1495 C1085 1510 1050 1505 1045 1495 M1060 1470 L1070 1500 M1090 1460 L1075 1500 M1068 1505 L1065 1545 Q1075 1525 1088 1530 M1190 1490 C1215 1475 1250 1490 1258 1525 L1205 1510 Z",
  // dog
  "M150 1570 C145 1625 180 1640 180 1665 C175 1700 165 1735 180 1748 L215 1750 Q235 1745 228 1730 L215 1720 L218 1700 L245 1695 L262 1695 L262 1740 L310 1742 Q320 1735 310 1720 L300 1718 L300 1680 M150 1570 Q162 1565 160 1590 Q165 1620 200 1615 L230 1610 M230 1610 C215 1640 220 1665 240 1670 C265 1680 275 1640 265 1625 C260 1605 240 1605 230 1610 C260 1570 310 1575 325 1600 C345 1625 345 1650 320 1655 C300 1662 285 1660 270 1658 M318 1632 q10 -10 12 2 q-8 8 -12 -2 M295 1623 q5 -4 6 0 M305 1645 q10 5 15 -2 M200 1742 l0 -10 M290 1740 l0 -10 M255 1590 Q290 1570 312 1590",
  // photo frames, peace sign
  "M440 1690 L475 1655 L495 1672 L520 1645 L555 1665 M415 1640 L410 1658 L420 1668 M460 1590 L510 1568 L530 1580 M550 1605 L578 1645 L570 1660 M440 1700 L470 1728 L520 1700 M635 1605 L632 1555 Q640 1540 648 1555 L655 1605 L665 1560 Q680 1545 685 1560 L678 1615 C700 1640 690 1680 665 1685 C635 1690 612 1670 612 1635 C595 1630 600 1600 612 1600 L625 1590 Q640 1590 635 1605 M612 1630 L665 1620 Q670 1640 645 1645 Q640 1655 650 1660",
  "M708 1700 C700 1650 740 1630 765 1645 C790 1635 805 1665 805 1690 Z M785 1590 l8 15 l15 -5 M775 1615 l15 0 l-2 15",
  // drops
  "M45 1670 C38 1690 45 1712 55 1712 C70 1710 70 1695 45 1670 M25 1722 C12 1745 20 1758 28 1756 C40 1752 38 1740 25 1722 M0 1670 Q8 1690 0 1708 M988 168 C980 178 985 200 998 198 C1012 195 1008 180 988 168 M950 218 C938 240 945 250 952 248 C965 245 962 232 950 218 M1112 215 C1100 225 1110 238 1115 235 C1122 230 1120 222 1112 215 M1475 540 C1460 560 1470 572 1477 570 C1485 560 1485 550 1475 540 M1500 568 C1490 590 1500 600 1508 597 C1518 590 1510 575 1500 568 M1470 590 C1460 610 1470 622 1478 618 C1488 610 1482 600 1470 590 M1210 1635 C1190 1650 1200 1662 1208 1658 C1218 1650 1212 1640 1210 1635 M1275 1632 C1270 1650 1280 1660 1288 1655 C1296 1645 1285 1638 1275 1632 M1315 1640 C1308 1655 1318 1668 1326 1662 C1330 1650 1322 1645 1315 1640 M1535 1525 q12 -12 25 0 q-12 12 -25 0",
  // laptop base and bell
  "M35 1940 L145 1952 L150 1960 L225 1968 L228 1962 L340 1975 Q340 1995 325 1996 L45 1965 Q25 1960 22 1942 L35 1940 M0 1795 L30 1780 Q45 1775 45 1790 Q40 1810 45 1830 L30 1845 L0 1838",
  // apple, dinosaur
  "M470 1760 C445 1755 435 1780 445 1800 C455 1825 475 1825 485 1820 C505 1820 515 1790 510 1780 L500 1770 C510 1755 490 1755 478 1762 M478 1762 Q478 1745 470 1745 M480 1755 Q480 1745 490 1745",
  "M335 1870 C345 1830 430 1820 450 1850 C490 1880 480 1930 478 1960 C470 2000 520 2020 548 2000 C535 2050 460 2060 420 2050 C380 2070 340 2040 335 2025 C380 2020 350 2010 370 1990 C340 1975 340 1955 365 1955 C340 1940 330 1900 335 1870 M355 1890 q15 10 28 2 q-5 15 -15 13 q-10 -4 -13 -15 M362 1863 l3 3 M375 1862 l3 3 M430 1875 q10 -4 18 6 M400 1965 Q400 1950 430 1955 L458 1965 M400 1965 Q405 1980 425 1975 M448 1840 l15 -12 l0 20 l14 -4 l-4 18 l14 2 l-6 14 l12 6 l-10 12 l12 8 l-12 10 l10 10 l-12 8 l8 12 l-12 8 l8 12 l-10 6 l12 12 l0 14 l14 0 l8 8 l14 -6 l8 6 l12 -6",
  // car, creeper, reload, play
  "M668 1995 L668 1970 Q675 1950 685 1948 C690 1915 740 1915 748 1940 Q765 1950 767 1965 L765 1990 L752 2005 L740 1995 L690 1998 L685 2010 L672 2008 Z M685 1948 L748 1942 M690 1945 C695 1925 738 1925 742 1940 M150 2050 L160 2028 L182 2030 L182 2048 L200 2050 L200 2088 L188 2086 L186 2072 L166 2070 L164 2084 L150 2080 Z M250 2010 L278 2025 L260 2038 Z M725 2040 L755 2060 L728 2082 Z",
  // citrus segments
  "M862 2020 L862 2068 M862 2082 L862 2130 M808 2075 L855 2075 M870 2075 L916 2075 M824 2037 L856 2070 M868 2080 L900 2112 M900 2037 L868 2070 M856 2080 L824 2112",
  // heart-eyes faces
  "M980 92 C975 82 990 78 994 86 C1002 80 1008 90 1000 98 L992 104 Z M1018 84 C1015 74 1028 72 1032 80 C1040 72 1046 84 1038 92 L1030 98 Z M1000 112 Q1020 115 1036 104 Q1035 128 1016 128 Q1004 124 1000 112 M1225 338 C1222 328 1235 326 1238 334 C1246 328 1250 338 1244 344 L1237 350 Z M1262 330 C1260 320 1272 320 1275 328 C1282 322 1288 332 1282 338 L1274 344 Z M1245 360 Q1262 362 1276 352 Q1275 372 1260 372 Q1248 368 1245 360 M768 1755 C765 1745 780 1742 784 1752 C792 1746 798 1756 792 1764 L782 1770 Z M808 1746 C806 1736 820 1734 823 1744 C832 1738 838 1748 832 1756 L822 1762 Z M790 1778 Q808 1782 826 1772 Q824 1795 806 1795 Q794 1790 790 1778",
  // aeroplane
  "M1120 30 C1125 5 1145 30 1148 75 L1195 65 Q1200 55 1230 52 Q1235 60 1200 80 Q1180 90 1165 100 L1190 145 Q1190 160 1175 150 L1125 115 L1080 125 Q1065 128 1075 110 L1120 85 Z M985 10 C1000 25 1060 20 1075 0",
  // cups
  "M1075 275 C1085 235 1160 240 1168 250 C1180 300 1150 320 1120 325 C1090 325 1075 300 1075 275 M1080 285 C1100 300 1160 280 1166 262 M1172 268 Q1192 262 1188 280 Q1185 300 1165 298 M1158 822 C1160 812 1235 815 1235 828 C1225 840 1155 835 1158 822 M1158 825 L1150 895 C1165 910 1210 905 1215 900 L1228 832 M1225 855 Q1248 855 1240 880 Q1230 890 1218 885 M1220 2030 L1190 2100 Q1210 2125 1250 2120 L1275 2050 M1215 2030 C1235 2020 1280 2040 1275 2055 C1255 2060 1215 2050 1215 2030 M1262 2082 Q1285 2080 1280 2105 L1262 2112",
  // bells
  "M1275 870 C1275 830 1280 815 1298 815 C1320 820 1315 840 1332 865 L1332 870 L1272 878 Z M1290 878 Q1300 890 1312 874 M1292 812 q6 -6 10 2 M1240 1445 C1265 1420 1255 1370 1290 1367 C1330 1370 1315 1410 1320 1440 L1315 1450 L1242 1450 Z M1265 1450 Q1280 1465 1292 1450 M1285 1362 a8 8 0 1 1 10 2 M1295 1390 Q1305 1385 1300 1415 Q1290 1420 1295 1390",
  // calendar base
  "M1220 272 L1235 262 L1368 236 L1362 248 L1235 282 Z M1225 155 L1340 132",
  // telephone, donut, bottle drops
  "M982 360 C975 400 1010 450 1030 445 C1052 440 1050 425 1035 418 Q1020 420 1010 405 Q998 385 1008 378 Q1005 350 990 347 Q980 350 982 360 M1295 420 C1290 385 1350 350 1390 370 C1420 400 1370 440 1330 450 C1300 450 1290 435 1295 420 M1300 425 Q1315 440 1330 432 Q1340 445 1360 428 Q1385 420 1395 395 M1320 385 l8 4 M1345 375 l8 -4 M1310 405 l5 -6 M1375 380 l6 6 M1375 400 l-5 8 M918 185 q-14 14 -5 20 q10 2 5 -20 M18 1575 q-14 22 2 28 q18 -4 -2 -28",
  // bicycle
  "M893 545 L968 462 C980 440 940 455 940 445 Q935 430 960 432 Q985 440 985 455 L1015 505 Q1025 510 1038 505 M965 470 L965 560 L1030 515 L970 480 M1030 515 L1050 605 M1038 510 L1058 605 M1030 515 L1045 500 L1038 488 Q1050 475 1085 480 Q1090 495 1075 505 L1045 500 M970 572 L955 595 M950 585 L975 600 M885 535 L955 460",
  // newspaper, watering can
  "M1312 515 Q1305 520 1308 535 L1325 600 M1312 515 L1320 512 M1340 500 L1370 494 M1340 515 L1385 505 M1340 532 L1388 520 M1345 550 L1390 538 M1348 570 L1425 550 M1515 462 L1555 455 L1595 540 L1530 560 Z M1515 462 C1530 445 1550 450 1555 458 M1520 500 L1500 520 L1485 510 L1505 545 L1530 555 M1560 460 Q1590 445 1595 475 L1590 520 M1565 472 Q1582 460 1585 485 L1583 510",
  // melon face, guitar
  "M1060 760 C1080 820 1160 830 1180 780 Q1188 765 1182 750 M1060 760 Q1070 810 1105 812 Q1120 810 1115 790 Q1095 775 1060 760 M1100 755 q15 10 35 0 M1190 750 Q1200 740 1235 760 Q1250 775 1240 795 Q1230 800 1225 790 Q1210 815 1200 795 Q1215 790 1205 775 M1320 770 C1330 800 1360 820 1375 840 C1400 870 1450 870 1465 840 C1480 815 1450 770 1440 765 L1415 760 M1375 840 L1395 875 L1420 895 L1465 895 L1450 880 L1500 900 L1515 910 L1495 860 L1510 855 L1495 830 M1350 750 L1375 772 M1410 828 L1432 808 M1418 832 L1436 815 M1445 760 L1500 780 L1495 830",
  // octopus
  "M970 1090 C960 1040 980 990 1040 988 C1100 995 1110 1060 1130 1120 C1115 1150 1090 1180 1105 1210 C1120 1235 1170 1225 1175 1205 C1180 1180 1160 1170 1175 1150 Q1180 1120 1215 1105 Q1210 1130 1230 1150 C1240 1210 1200 1245 1160 1240 C1120 1245 1105 1220 1105 1210 M970 1060 C985 1080 985 1120 985 1140 C970 1200 920 1230 895 1205 C895 1170 950 1170 935 1120 Q935 1090 940 1095 C925 1130 880 1130 862 1175 C850 1240 890 1265 930 1265 C960 1270 970 1260 985 1265 M940 1065 Q955 1075 955 1110 Q970 1150 985 1140 M1100 1030 C1130 1010 1160 1010 1180 985 Q1190 990 1155 1040 Q1120 1060 1118 1070 C1160 1060 1180 1110 1160 1145 Q1140 1190 1130 1185 C1125 1200 1145 1210 1165 1205 M1000 1195 C975 1220 980 1260 1000 1280 C1040 1300 1010 1350 930 1360 C900 1350 970 1330 965 1300 L915 1320 C880 1310 880 1270 930 1268 M1050 1215 C1030 1250 1080 1280 1095 1300 C1100 1340 1060 1370 1040 1355 C1080 1300 1035 1300 1000 1280 M1100 1220 C1110 1260 1110 1280 1130 1280 C1150 1260 1180 1270 1188 1265 Q1160 1310 1130 1320 Q1100 1330 1095 1310",
  "M985 1085 L1085 1050 M988 1080 Q990 1110 1015 1108 Q1035 1105 1030 1075 Z M1038 1070 Q1040 1100 1065 1095 Q1088 1090 1085 1060 Z M1045 1120 q8 -10 15 -5 q-3 12 -15 5 M870 1170 q15 0 8 20 M865 1210 q15 0 12 20 M890 1245 q10 -12 20 5 M930 1155 q10 -5 18 10 M1160 1230 q6 -15 18 0 M1200 1215 q0 -15 18 -10 M1125 1040 q5 12 15 5",
  // basketball, shoe
  "M1188 1030 Q1225 1035 1250 1025 M1195 1065 Q1225 1045 1255 1050 M1210 1010 Q1225 1045 1215 1078 M1240 1012 Q1215 1040 1240 1070 M1250 1110 L1280 1098 L1295 1065 C1320 1060 1350 1045 1375 1040 C1395 1035 1385 1060 1370 1075 L1280 1145 C1262 1150 1245 1120 1250 1110 M1260 1128 L1300 1105 L1370 1060 M1305 1065 q5 8 10 -2 M1320 1060 q5 8 10 -2 M1335 1055 q5 8 10 -2",
  // voice message, bird, lighthouse
  "M1210 1255 L1425 1208 Q1418 1230 1425 1275 L1225 1318 Q1215 1290 1210 1255 M1242 1262 q8 -8 10 4 l2 12 q-6 8 -10 -2 Z M1238 1282 q12 20 24 -2 M1252 1288 l2 10 M1278 1258 L1300 1265 L1282 1280 Z M1312 1262 L1400 1248 M1380 1275 l5 5 l10 -15 M1392 1277 l10 -14 M1480 1185 L1525 1180 L1540 1195 L1580 1200 L1570 1210 L1520 1215 L1500 1245 L1470 1240 L1495 1220 L1470 1215 L1490 1205 Z M1550 1190 Q1565 1180 1580 1190 L1588 1235 M1535 1215 L1590 1220 M1535 1230 L1592 1232",
  // burger and cursor
  "M1350 1350 C1355 1325 1385 1310 1415 1312 C1445 1315 1465 1335 1465 1355 C1430 1360 1380 1362 1350 1362 Z M1345 1365 Q1360 1382 1380 1372 L1400 1385 L1425 1370 Q1450 1380 1485 1362 M1345 1385 Q1370 1400 1400 1392 L1430 1400 L1478 1380 M1345 1405 Q1400 1410 1475 1395 M1352 1415 C1355 1440 1385 1440 1415 1438 C1445 1435 1475 1430 1475 1405 M1385 1335 l4 -5 M1405 1328 l4 3 M1425 1335 l5 -3 M1500 1450 L1508 1480 L1515 1468 L1530 1482 L1535 1475 L1522 1462 L1535 1455 Z",
  // cherry, ice lolly face, splash, soft-serve
  "M1070 1530 C1040 1530 1035 1570 1050 1585 C1070 1600 1110 1600 1110 1565 C1110 1540 1090 1530 1080 1535 M1080 1535 Q1070 1510 1060 1510 M1080 1535 Q1090 1505 1100 1505 M1200 1545 l10 -4 l-8 -6 M1235 1535 l-8 4 l8 4 M1215 1570 Q1228 1572 1240 1562 Q1240 1582 1230 1582 Q1222 1580 1222 1572 M1300 1600 C1290 1570 1310 1560 1305 1545 Q1320 1530 1380 1530 C1410 1530 1420 1560 1400 1575 C1385 1590 1400 1640 1370 1655 C1350 1650 1350 1620 1335 1610 Q1305 1610 1300 1600 M1500 1540 Q1498 1530 1515 1528 Q1520 1545 1530 1550 Q1550 1560 1540 1572 Q1560 1570 1570 1580 Q1590 1600 1570 1620 M1500 1550 Q1480 1555 1490 1572 Q1470 1575 1478 1600 L1475 1625 M1490 1572 Q1520 1570 1540 1555 M1480 1600 Q1530 1605 1565 1580",
  // hand
  "M1110 1895 C1100 1840 1095 1800 1115 1795 C1125 1830 1145 1850 1155 1840 C1170 1825 1145 1790 1130 1780 Q1140 1775 1165 1795 L1190 1820 M1190 1820 L1185 1765 Q1195 1740 1205 1760 L1205 1805 L1220 1765 Q1235 1755 1232 1770 L1210 1825 L1240 1800 Q1255 1795 1245 1810 L1200 1870 L1180 1895",
  // clover
  "M1005 1885 C975 1870 980 1830 1000 1840 C1005 1825 1040 1830 1025 1860 Z M1005 1885 C1025 1850 1055 1860 1050 1875 C1065 1890 1040 1915 1010 1890 Z M1005 1885 C1010 1910 1040 1915 1030 1925 C1020 1940 1000 1930 1000 1895 Z M1005 1885 C975 1865 955 1860 965 1880 C955 1895 975 1910 1000 1890 Z M998 1892 L965 1928",
  // cat
  "M1238 1735 C1230 1710 1235 1700 1250 1708 L1268 1705 M1268 1700 Q1290 1685 1318 1692 Q1335 1665 1345 1685 C1360 1730 1350 1765 1320 1772 C1275 1785 1245 1770 1238 1735 M1285 1775 C1300 1800 1300 1825 1295 1838 L1320 1840 Q1335 1835 1325 1815 L1325 1800 Q1360 1800 1370 1795 L1370 1820 L1400 1820 C1420 1780 1410 1750 1395 1735 Q1415 1700 1390 1685 Q1375 1690 1390 1710 Q1395 1730 1350 1740 M1262 1725 m-8 0 a8 9 0 1 0 16 0 a8 9 0 1 0 -16 0 M1312 1714 m-8 0 a8 9 0 1 0 16 0 a8 9 0 1 0 -16 0 M1290 1730 l6 4 l5 -6 M1282 1742 q10 6 14 -4 q8 6 16 -3 M1380 1790 l8 15 M1345 1795 l0 15",
  // gamepad
  "M1182 1965 C1180 1940 1210 1900 1220 1880 C1240 1845 1275 1845 1305 1870 C1320 1885 1350 1875 1375 1885 C1400 1900 1390 1930 1392 1970 C1390 2010 1385 2040 1365 2038 C1330 2035 1330 1990 1310 1980 C1280 1960 1260 1960 1230 1982 C1200 1990 1185 1985 1182 1965 M1255 1875 q8 -3 10 3 l2 10 l10 0 q10 8 4 14 l-10 2 l2 8 q-8 10 -14 2 l-3 -10 l-10 0 q-8 -8 0 -14 l10 -2 Z M1302 1925 L1312 1902 L1318 1904 L1308 1930 Z",
  // alarm clock legs, croissant
  "M1000 2050 L1125 2025 Q1130 2035 1120 2038 L1010 2062 M1090 1960 q10 -10 18 -4 M1052 2145 C1055 2120 1080 2090 1100 2075 C1125 2060 1160 2065 1155 2095 C1170 2110 1150 2160 1115 2165 C1095 2170 1080 2160 1075 2155 Q1055 2175 1052 2145 M1075 2105 Q1075 2135 1095 2160 M1105 2075 L1150 2120 M1130 2068 Q1150 2040 1162 2065 L1155 2090 M1070 2120 Q1050 2110 1055 2140",
  // chair
  "M1330 2115 C1330 2100 1350 2090 1370 2085 C1380 2060 1400 2050 1415 2045 C1430 2015 1450 2015 1453 2035 C1455 2070 1450 2100 1450 2105 C1430 2115 1400 2120 1390 2125 C1360 2135 1330 2135 1330 2115 M1345 2105 Q1365 2090 1390 2100 L1390 2125 M1390 2090 Q1420 2075 1450 2070 M1350 2135 L1325 2175 Q1328 2185 1335 2180 L1365 2135 M1390 2128 L1398 2192 L1405 2192 L1405 2125 M1415 2122 L1440 2175 L1448 2172 L1428 2118",
  // key, sandals, toothbrush, book
  "M1500 2175 C1520 2150 1535 2165 1540 2150 L1545 2130 Q1555 2125 1560 2135 L1555 2150 L1562 2155 L1552 2160 L1558 2170 L1548 2175 C1570 2200 1560 2225 1530 2235 C1500 2240 1490 2215 1500 2175 M1195 2240 C1175 2210 1180 2180 1205 2180 C1225 2185 1225 2215 1240 2235 L1230 2255 M1190 2200 L1210 2205 L1225 2225 M1250 2220 C1255 2200 1255 2170 1275 2135 Q1300 2125 1305 2150 C1300 2190 1280 2230 1265 2235 Q1250 2235 1250 2220 M1262 2190 L1280 2150 L1295 2175 M945 2105 L955 2095 L1050 2195 L1045 2205 Z M960 2090 l15 -12 l22 22 l-8 10 M870 2250 L860 2200 M790 2190 L950 2145 M800 2225 l30 -6 M910 2200 l38 -8 M912 2215 l38 -8 M918 2232 l36 -8 M930 1990 l20 -12 M935 2000 l22 0 M945 1960 l14 12",
  // signpost
  "M762 1865 L830 1842 L840 1855 L800 1868 L805 1900 M765 1875 L795 1868 L820 1920",
  // ruler and arrow along the bottom
  "M440 2230 L495 2215 L505 2253 M450 2228 l4 14 M463 2225 l4 14 M476 2222 l4 14 M632 2235 L660 2215 L672 2225 L655 2253 M760 2230 L795 2210",
];
const LETTERS = [
  ["42", 188, 108, 66, -8], ["24", 1230, 222, 78, -8], ["BFF", 1095, 395, 60, 30], ["Hi", 905, 1787, 58, 0],
  ["09:28", 990, 2022, 48, -14], ["A", 838, 1955, 78, -8], ["W", 876, 2212, 30, -10], ["W", 655, 100, 48, 0],
];

const STAR = "M0 -1 L.28 -.36 L.96 -.3 L.44 .16 L.6 .82 L0 .48 L-.6 .82 L-.44 .16 L-.96 -.3 L-.28 -.36 Z";
const SPARK = "M0 -1 Q.12 -.14 1 0 Q.12 .14 0 1 Q-.12 .14 -1 0 Q-.12 -.14 0 -1 Z";
const HEART = "M0 .9 C-1 .3 -1.1 -.3 -.9 -.6 C-.6 -.95 -.15 -.8 0 -.35 C.2 -.9 .7 -.95 .9 -.6 C1.15 -.2 .8 .5 0 .9 Z";
const LINE = 3.6;

const Motif = ({ d, x, y, s, r = 0 }) => (
  <path d={d} transform={`translate(${x} ${y}) rotate(${r}) scale(${s})`} strokeWidth={LINE / s} />
);

const Doodles = () => (
  <Wallpaper aria-hidden="true">
    <defs>
      <pattern id="doodles" width="1620" height="2253" patternUnits="userSpaceOnUse" patternTransform="scale(0.33333)">
        <g id="tile" fill="none" stroke="#182127" strokeWidth={LINE} strokeLinejoin="round" strokeLinecap="round">
          {DOTS.map(([x, y, r], i) => <circle key={i} cx={x} cy={y} r={r} />)}
          {RINGS.map(([x, y, r], i) => <circle key={i} cx={x} cy={y} r={r} />)}
          {BOXES.map(([x, y, w, h, c, a], i) => (
            <rect key={i} x={x - w / 2} y={y - h / 2} width={w} height={h} rx={c} transform={`rotate(${a} ${x} ${y})`} />
          ))}
          {STARS.map(([x, y, s, r], i) => <Motif key={i} d={STAR} x={x} y={y} s={s} r={r} />)}
          {SPARKLES.map(([x, y, s], i) => <Motif key={i} d={SPARK} x={x} y={y} s={s} r={5} />)}
          {HEARTS.map(([x, y, s], i) => <Motif key={i} d={HEART} x={x} y={y} s={s} r={-10} />)}
          {PATHS.map((d, i) => <path key={i} d={d} />)}
          {LETTERS.map(([t, x, y, s, r], i) => (
            <text key={i} x={x} y={y} fontSize={s} fontWeight="700" fontFamily="Open Sans, sans-serif" transform={`rotate(${r} ${x} ${y})`}>{t}</text>
          ))}
        </g>
        <use href="#tile" x="-1620" />
        <use href="#tile" x="1620" />
      </pattern>
    </defs>
    <rect width="100%" height="100%" fill="url(#doodles)" />
  </Wallpaper>
);

const THREAD = [
  { out: true, items: [
    ["Komt die: wanneer pas je art. 14 lid 1 Rome I toe en wanneer art. 10:135 lid 1 BW?", "12:06"],
    ["OEF", "12:06"],
    ["Daar ga je", "12:07"],
    ["genekt", "12:07"],
  ] },
  { items: [
    ["Hahahaha", "12:07"],
    ["Jupp", "12:07"],
    ["Boek 10 gebruik je toch als een verordening niet van toepassing is", "12:07"],
  ] },
  { out: true, items: [["Euh", "12:07"], ["ja", "12:07"], ["dat klopt", "12:07"]] },
  { items: [["Ha", "12:07"]] },
  { out: true, items: [["maar de vraag is wanneer art. 14 lid 1 Rome I dan wel van toepassing is", "12:07"]] },
  { items: [["Ja staat in art 1 of 2 van rome 1 toch", "12:07"]] },
  { out: true, items: [
    ["Neen", "12:08"],
    ["art. 14 Rome I heeft zelfs een hele specifieke onderwerp waarop het ziet", "12:08"],
  ] },
  { items: [["Oh", "12:08"]] },
  { out: true, items: [["net zoals art. 10:135 lid 1 en 2 BW overigens", "12:08", true]] },
  { items: [["Zie ik woensdag of donderdag wel", "12:09"], ["Jaha", "12:09"]] },
];

export default function App() {
  return (
    <Chat>
      <GlobalStyle />
      <Doodles />
      <Thread>
        {THREAD.map(({ out, items }, g) => (
          <Group key={g} $out={out}>
            {items.map(([text, time, hovered], i) => (
              <Row key={text}>
                {hovered && (
                  <ReactButton type="button" aria-label="Reageren">
                    <Smiley />
                  </ReactButton>
                )}
                <Bubble $out={out} $tail={i === 0}>
                  <Text>{text}</Text>
                  <Meta>
                    <Time $out={out}>{time}</Time>
                    {out && <Ticks />}
                  </Meta>
                </Bubble>
              </Row>
            ))}
          </Group>
        ))}
      </Thread>
    </Chat>
  );
}
